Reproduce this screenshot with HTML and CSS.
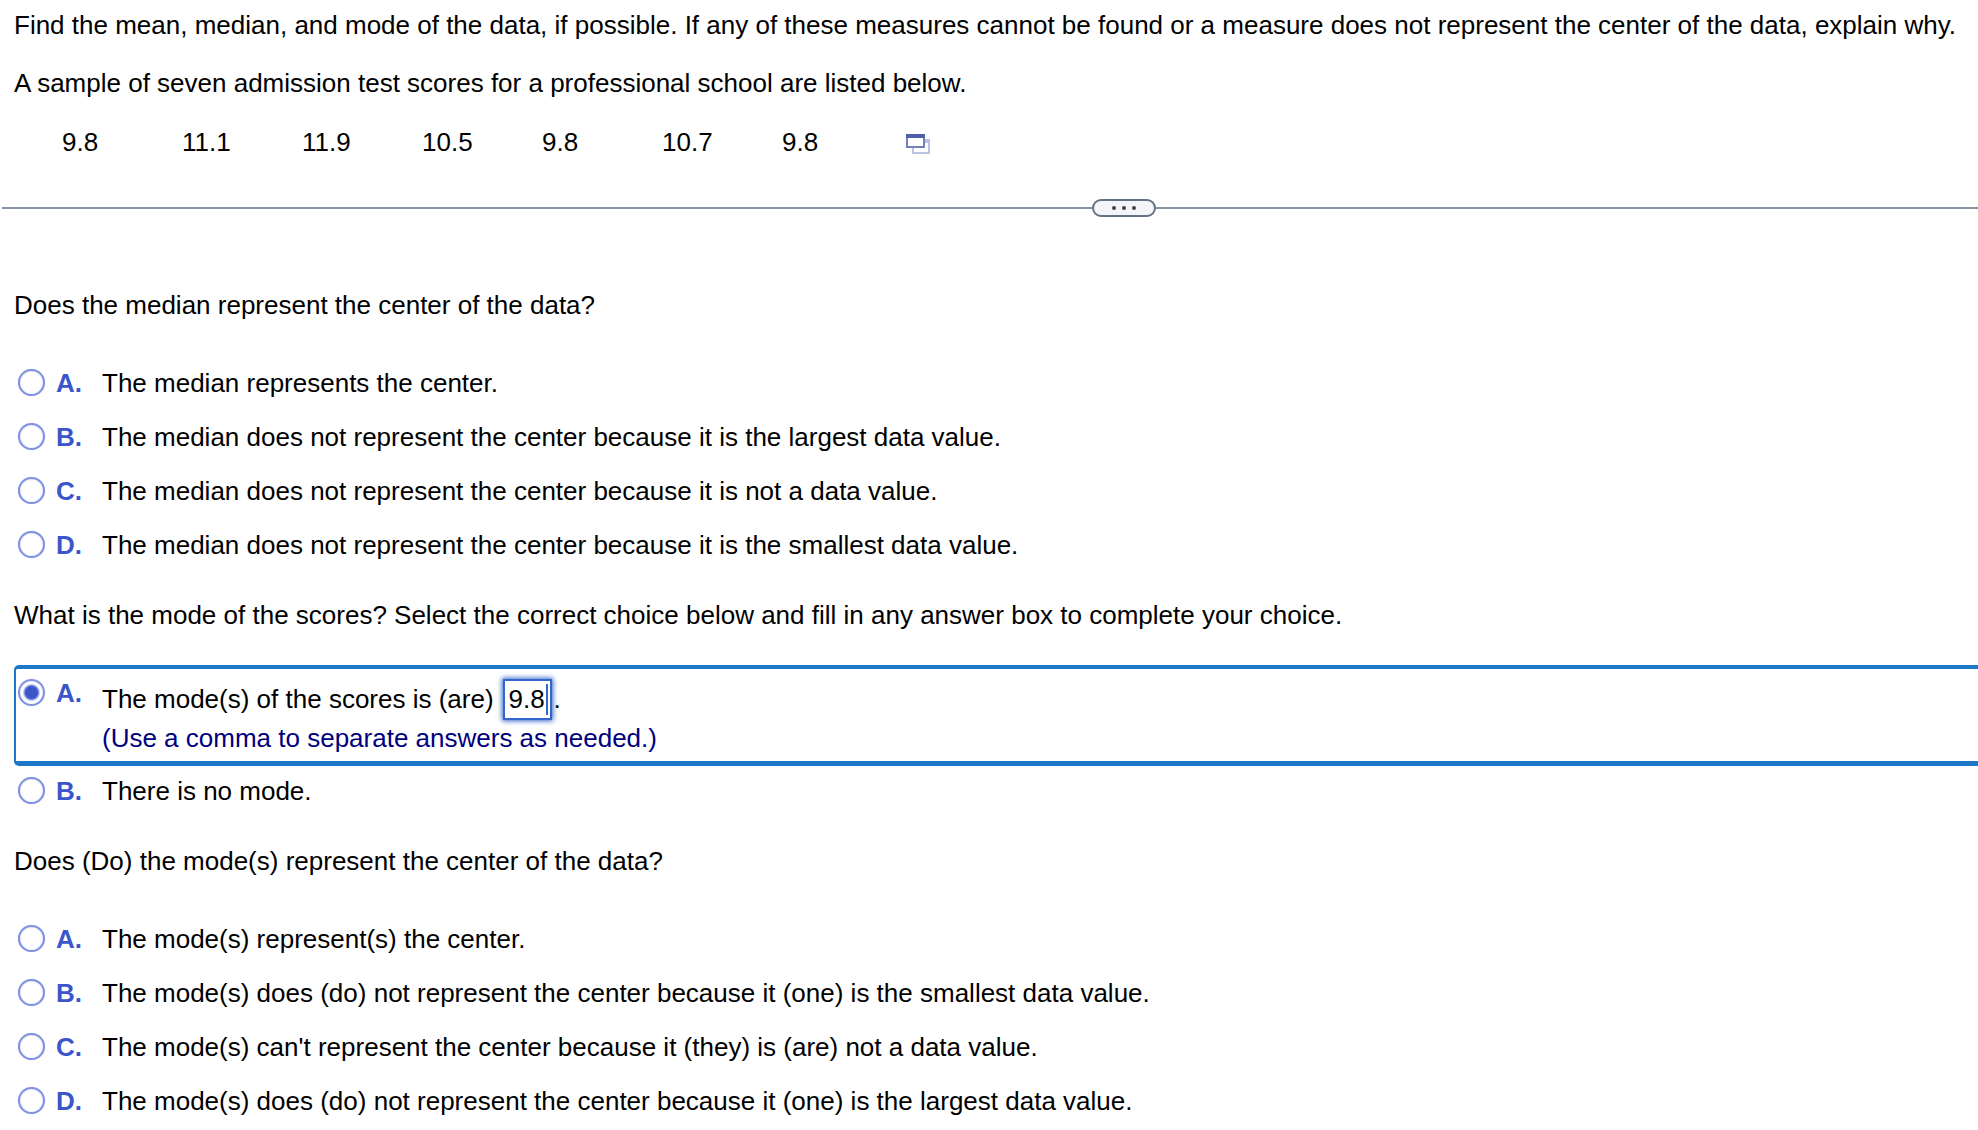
FILE: index.html
```html
<!DOCTYPE html>
<html lang="en">
<head>
<meta charset="utf-8">
<meta name="viewport" content="width=device-width, initial-scale=1">
<title>Mean, median, and mode</title>
<link rel="stylesheet" href="styles.css">
</head>
<body>
<header class="problem">
  <p>Find the mean, median, and mode of the data, if possible. If any of these measures cannot be found or a measure does not represent the center of the data, explain why.</p>
  <p>A sample of seven admission test scores for a professional school are listed below.</p>
  <div class="scores">
    <table>
      <tr><td>9.8</td><td>11.1</td><td>11.9</td><td>10.5</td><td>9.8</td><td>10.7</td><td>9.8</td></tr>
    </table>
    <button class="copy" type="button" aria-label="Open data in a new window">
      <svg width="26" height="22" viewBox="0 0 26 22" fill="none">
        <path d="M20 8h4v12H8v-5" stroke="#bcc2e2" stroke-width="2"/>
        <path d="M19 8h6" stroke="#bcc2e2" stroke-width="4"/>
        <rect x="2" y="2" width="17" height="12" fill="#fff" stroke="#7380bd" stroke-width="2"/>
        <path d="M1 3h19" stroke="#4f60aa" stroke-width="4"/>
      </svg>
    </button>
  </div>
</header>

<div class="divider">
  <button class="handle" type="button" aria-label="Resize question area"><i></i><i></i><i></i></button>
</div>

<main class="questions">
  <section>
    <p id="q1">Does the median represent the center of the data?</p>
    <div class="options" role="radiogroup" aria-labelledby="q1">
      <label class="option"><input type="radio" name="median"><b>A.</b><span>The median represents the center.</span></label>
      <label class="option"><input type="radio" name="median"><b>B.</b><span>The median does not represent the center because it is the largest data value.</span></label>
      <label class="option"><input type="radio" name="median"><b>C.</b><span>The median does not represent the center because it is not a data value.</span></label>
      <label class="option"><input type="radio" name="median"><b>D.</b><span>The median does not represent the center because it is the smallest data value.</span></label>
    </div>
  </section>

  <section>
    <p id="q2">What is the mode of the scores? Select the correct choice below and fill in any answer box to complete your choice.</p>
    <div class="options compact" role="radiogroup" aria-labelledby="q2">
      <div class="option active">
        <input type="radio" name="mode" id="mode-a" checked>
        <label for="mode-a"><b>A.</b></label>
        <div class="fill">
          <div class="line">
            <label for="answer">The mode(s) of the scores is (are)</label>
            <span class="answer"><input type="text" id="answer" value="9.8"></span>
            <span>.</span>
          </div>
          <div class="hint">(Use a comma to separate answers as needed.)</div>
        </div>
      </div>
      <label class="option"><input type="radio" name="mode"><b>B.</b><span>There is no mode.</span></label>
    </div>
  </section>

  <section>
    <p id="q3">Does (Do) the mode(s) represent the center of the data?</p>
    <div class="options" role="radiogroup" aria-labelledby="q3">
      <label class="option"><input type="radio" name="center"><b>A.</b><span>The mode(s) represent(s) the center.</span></label>
      <label class="option"><input type="radio" name="center"><b>B.</b><span>The mode(s) does (do) not represent the center because it (one) is the smallest data value.</span></label>
      <label class="option"><input type="radio" name="center"><b>C.</b><span>The mode(s) can't represent the center because it (they) is (are) not a data value.</span></label>
      <label class="option"><input type="radio" name="center"><b>D.</b><span>The mode(s) does (do) not represent the center because it (one) is the largest data value.</span></label>
    </div>
  </section>
</main>
</body>
</html>
```
FILE: styles.css
```css
* {
  box-sizing: border-box;
}

body {
  margin: 0;
  background: #fff;
  color: #000;
  font: 26px/30px "Liberation Sans", Arial, sans-serif;
}

p {
  margin: 0;
}

button {
  padding: 0;
  border: 0;
  background: none;
  cursor: pointer;
}

.problem {
  display: flex;
  flex-direction: column;
  gap: 28px;
  padding: 10px 14px 0;
}

.scores {
  display: flex;
  align-items: center;
  padding: 1px 0 0 48px;
}

.scores table {
  border-collapse: collapse;
}

.scores td {
  width: 120px;
  padding: 0;
}

.copy {
  display: flex;
  margin-left: 3px;
  padding-top: 3px;
}

/* Splitter between the problem and the questions */
.divider {
  display: flex;
  align-items: center;
  margin: 42px 0 73px 2px;
}

.divider::before,
.divider::after {
  content: "";
  height: 2px;
  background: #8792a5;
}

.divider::before {
  flex: 57;
}

.divider::after {
  flex: 43;
}

.handle {
  display: flex;
  align-items: center;
  justify-content: center;
  gap: 6px;
  width: 64px;
  height: 18px;
  border: 2px solid #647282;
  border-radius: 9px;
  background: #f3f5f8;
}

.handle i {
  width: 4px;
  height: 4px;
  border-radius: 50%;
  background: #444;
}

.questions {
  display: flex;
  flex-direction: column;
  gap: 40px;
  padding-left: 14px;
}

.options {
  display: flex;
  flex-direction: column;
  gap: 24px;
  padding-top: 48px;
}

.options.compact {
  gap: 10px;
  padding-top: 35px;
}

.option {
  display: grid;
  grid-template-columns: 27px 35px 1fr;
  column-gap: 11px;
  padding-left: 4px;
}

.option b {
  color: #3b55cb;
}

.option input[type="radio"] {
  appearance: none;
  width: 27px;
  height: 27px;
  margin: 1px 0 0;
  border: 2px solid #7f91e0;
  border-radius: 50%;
  background: #fff;
  box-shadow: 0 0 1px #c5cdf2, inset 0 0 2px #c5cdf2;
}

.option input[type="radio"]:checked {
  background: radial-gradient(circle, #3b55cb 6px, #c5cdf2 8px, #fff 9px);
}

.active {
  padding: 9px 0 8px 2px;
  border: solid #1e78c8;
  border-width: 4px 0 5px 2px;
  border-radius: 5px 0 0 5px;
}

.line {
  display: flex;
  align-items: center;
  height: 42px;
}

.answer {
  position: relative;
  margin: 0 2px 0 9px;
}

.answer input {
  display: block;
  width: 49px;
  height: 41px;
  padding: 0 0 0 4px;
  border: 2px solid #3366cc;
  outline: 0;
  color: #000;
  font: inherit;
  box-shadow: 0 0 5px 1px #3366cc;
}

/* Insertion caret */
.answer::after {
  content: "";
  position: absolute;
  top: 5px;
  right: 4px;
  width: 2px;
  height: 31px;
  background: #3366cc;
}

.hint {
  margin-top: 3px;
  color: #000080;
}
```
